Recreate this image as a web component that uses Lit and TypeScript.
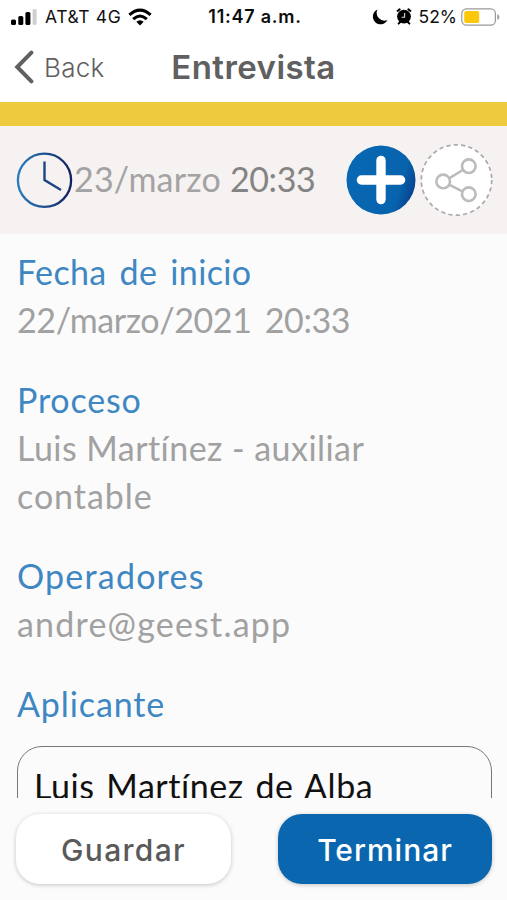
import { LitElement, html, css } from "lit";
import { customElement, property } from "lit/decorators.js";

@customElement("status-bar")
class StatusBar extends LitElement {
  static styles = css`
    :host {
      display: grid;
      grid-template-columns: 1fr auto 1fr;
      align-items: center;
      box-sizing: border-box;
      height: 34px;
      padding: 0 7px 0 10px;
      color: #111;
      font: 400 17.5px/34px "Inter", sans-serif;
    }
    .side { display: flex; align-items: center; }
    .carrier { margin-left: 8px; letter-spacing: 0.6px; white-space: nowrap; }
    .wifi { margin: 0 0 1px 7px; }
    .time { font-weight: 600; font-size: 18px; letter-spacing: 0.75px; color: #0c0c0c; white-space: nowrap; }
    .right { justify-content: flex-end; }
    .alarm { margin: 0 7px 1px 8px; }
    .pct { letter-spacing: 0; margin-right: 4px; }
    svg { display: block; flex: none; }
  `;
  render() {
    return html`
      <div class="side">
        <svg width="27" height="18" viewBox="0 0 27 18">
          <rect x="1" y="11.5" width="5" height="5.5" rx="1.6"></rect>
          <rect x="8.3" y="8" width="5" height="9" rx="1.6"></rect>
          <rect x="15.4" y="4" width="5" height="13" rx="1.6"></rect>
          <rect x="22.6" y="1" width="4" height="16" rx="1.4" fill="#cfcfcf"></rect>
        </svg>
        <span class="carrier">AT&amp;T 4G</span>
        <svg class="wifi" width="24" height="18" viewBox="0 0 24 18" fill="none" stroke="#000" stroke-width="3">
          <path d="M1.4 6.9 Q12 -2.6 22.6 6.9"></path>
          <path d="M5.2 11.1 Q12 4.8 18.8 11.1"></path>
          <path d="M12 17.4 L8.3 13.8 Q12 10.8 15.7 13.8 Z" fill="#000" stroke="none"></path>
        </svg>
      </div>
      <div class="time">11:47 a.m.</div>
      <div class="side right">
        <svg width="16" height="16" viewBox="0 0 16 16">
          <path d="M5.4 .6 A7.7 7.7 0 1 0 15.5 11 A7.8 7.8 0 0 1 5.4 .6Z"></path>
        </svg>
        <svg class="alarm" width="16" height="17" viewBox="0 0 16 17">
          <path d="M1.6 3 L3.6 1.4 M14.4 3 L12.4 1.4 M2.6 15.6 L4.6 13.5 M13.4 15.6 L11.4 13.5" stroke="#000" stroke-width="2" stroke-linecap="round"></path>
          <circle cx="8" cy="8.6" r="6.9"></circle>
          <path d="M8.6 5 V9.2 H5.6" fill="none" stroke="#ddd" stroke-width="1.1"></path>
        </svg>
        <span class="pct">52%</span>
        <svg width="39" height="18" viewBox="0 0 39 18">
          <rect x=".8" y=".8" width="33.6" height="16.4" rx="4.6" fill="#fff" stroke="#999" stroke-width="1.2"></rect>
          <rect x="3.2" y="3" width="15" height="12" rx="2" fill="#fdc70c"></rect>
          <path d="M36.3 6 Q38.4 7 38.4 9 Q38.4 11 36.3 12Z" fill="#999"></path>
        </svg>
      </div>
    `;
  }
}

@customElement("nav-header")
class NavHeader extends LitElement {
  static styles = css`
    :host {
      display: grid;
      grid-template-columns: 1fr auto 1fr;
      align-items: center;
      box-sizing: border-box;
      height: 92px;
      padding: 0 14px 25px;
      border-bottom: 24px solid #edca3e;
      color: #606060;
      font-family: "Inter", sans-serif;
    }
    .back { display: flex; align-items: center; gap: 9px; font-size: 26px; font-weight: 300; letter-spacing: 0.3px; }
    .title { font-size: 33px; line-height: 66px; font-weight: 600; letter-spacing: 0.45px; }
    svg { display: block; }
  `;
  render() {
    return html`
      <div class="back">
        <svg width="21" height="34" viewBox="0 0 21 34" fill="none" stroke="#606060" stroke-width="4" stroke-linecap="round" stroke-linejoin="miter">
          <path d="M17.4 2.6 L3.2 17 L17.4 31.4"></path>
        </svg>
        <span>Back</span>
      </div>
      <div class="title">Entrevista</div>
    `;
  }
}

@customElement("event-strip")
class EventStrip extends LitElement {
  static styles = css`
    :host {
      display: flex;
      align-items: center;
      box-sizing: border-box;
      height: 108px;
      padding: 0 14px 0 16px;
      background: #f6f2f1;
      color: #a4a3a3;
      font: 400 34px/48px "Lato", sans-serif;
    }
    svg { display: block; flex: none; }
    .date { flex: 1; margin: 0 0 3px 1px; letter-spacing: 0.2px; white-space: nowrap; }
    .hour { color: #858484; letter-spacing: -0.4px; }
    .share { margin-left: 4px; }
  `;
  render() {
    return html`
      <svg width="57" height="57" viewBox="0 0 57 57" fill="none">
        <defs>
          <linearGradient id="ring" x1="0" y1="0" x2="1" y2="0">
            <stop offset="0" stop-color="#2a7cbb"></stop>
            <stop offset=".55" stop-color="#1c4d8e"></stop>
            <stop offset="1" stop-color="#12205f"></stop>
          </linearGradient>
        </defs>
        <circle cx="28.5" cy="28.3" r="26.6" stroke="url(#ring)" stroke-width="2.3"></circle>
        <path d="M28.5 9.5 V28 L45 38" stroke="#1d4585" stroke-width="2.4"></path>
      </svg>
      <span class="date">23/marzo <span class="hour">20:33</span></span>
      <svg width="70" height="70" viewBox="0 0 70 70">
        <defs>
          <linearGradient id="disc" x1="0" y1=".35" x2="1" y2=".65">
            <stop offset="0" stop-color="#0868b3"></stop>
            <stop offset=".78" stop-color="#0863ad"></stop>
            <stop offset="1" stop-color="#083f8e"></stop>
          </linearGradient>
        </defs>
        <circle cx="35" cy="35" r="34.5" fill="url(#disc)"></circle>
        <path d="M35 15.4 V54.6 M15.4 35 H54.6" stroke="#fff" stroke-width="9.4" stroke-linecap="round"></path>
      </svg>
      <svg class="share" width="73" height="73" viewBox="0 0 73 73" fill="none">
        <circle cx="36.5" cy="36" r="35.2" fill="#fff" stroke="#aaa" stroke-width="1.7" stroke-dasharray="4.2 3.2"></circle>
        <g stroke="#bcbcbc" stroke-width="2.6">
          <path d="M29.5 34.2 L42.8 26 M29.5 40.8 L42.8 47.6"></path>
          <circle cx="23.2" cy="37.4" r="6.8"></circle>
          <circle cx="48.8" cy="22.2" r="6.8"></circle>
          <circle cx="48.8" cy="50.2" r="6.8"></circle>
        </g>
      </svg>
    `;
  }
}

@customElement("detail-field")
class DetailField extends LitElement {
  @property() label = "";
  static styles = css`
    :host { display: block; margin-bottom: 32px; }
    .label { color: #3e87c2; letter-spacing: var(--label-tracking, 0.8px); word-spacing: 4px; }
    .value { color: #a1a1a1; letter-spacing: var(--value-tracking, 0.8px); word-spacing: var(--value-gap, 0); }
  `;
  render() {
    return html`<div class="label">${this.label}</div><div class="value"><slot></slot></div>`;
  }
}

@customElement("app-root")
class AppRoot extends LitElement {
  static styles = css`
    :host {
      display: flex;
      flex-direction: column;
      box-sizing: border-box;
      height: 900px;
      overflow: hidden;
      background: #fff;
    }
    main {
      height: 564px;
      box-sizing: border-box;
      overflow: hidden;
      padding: 14px 15px 0 17px;
      background: #fbfbfb;
      font: 400 34px/48px "Lato", sans-serif;
    }
    .start { --label-tracking: 0.35px; --value-tracking: -0.4px; --value-gap: 5px; }
    .process { --value-tracking: 0.45px; }
    .last-line { letter-spacing: 0.95px; }
    .operators { --label-tracking: 1.2px; --value-tracking: 1.2px; }
    .applicant { color: #3e87c2; letter-spacing: 0.9px; }
    .box {
      box-sizing: border-box;
      height: 120px;
      margin-top: 18px;
      padding: 15px 16px;
      border: 1.5px solid #777;
      border-radius: 25px;
      color: #111;
      letter-spacing: 0.55px;
      word-spacing: 2.5px;
      white-space: nowrap;
    }
    footer {
      flex: 1;
      display: flex;
      justify-content: space-between;
      align-items: flex-start;
      padding: 16px 15px 0 16px;
      background: #fbfbfb;
    }
    button {
      height: 70px;
      padding: 3px 0 0;
      border: 0;
      border-radius: 24px;
      font: 500 30px/67px "Inter", sans-serif;
      letter-spacing: 1.3px;
      box-shadow: 0 1px 4px rgba(0, 0, 0, 0.22);
    }
    .save { width: 215px; background: #fff; color: #5a5a5a; }
    .finish { width: 214px; background: #0a67af; color: #fff; letter-spacing: 1px; }
  `;
  render() {
    return html`
      <status-bar></status-bar>
      <nav-header></nav-header>
      <event-strip></event-strip>
      <main>
        <detail-field class="start" label="Fecha de inicio">22/marzo/2021 20:33</detail-field>
        <detail-field class="process" label="Proceso">Luis Martínez - auxiliar<br /><span class="last-line">contable</span></detail-field>
        <detail-field class="operators" label="Operadores">andre@geest.app</detail-field>
        <div class="applicant">Aplicante</div>
        <div class="box">Luis Martínez de Alba</div>
      </main>
      <footer>
        <button class="save">Guardar</button>
        <button class="finish">Terminar</button>
      </footer>
    `;
  }
}
